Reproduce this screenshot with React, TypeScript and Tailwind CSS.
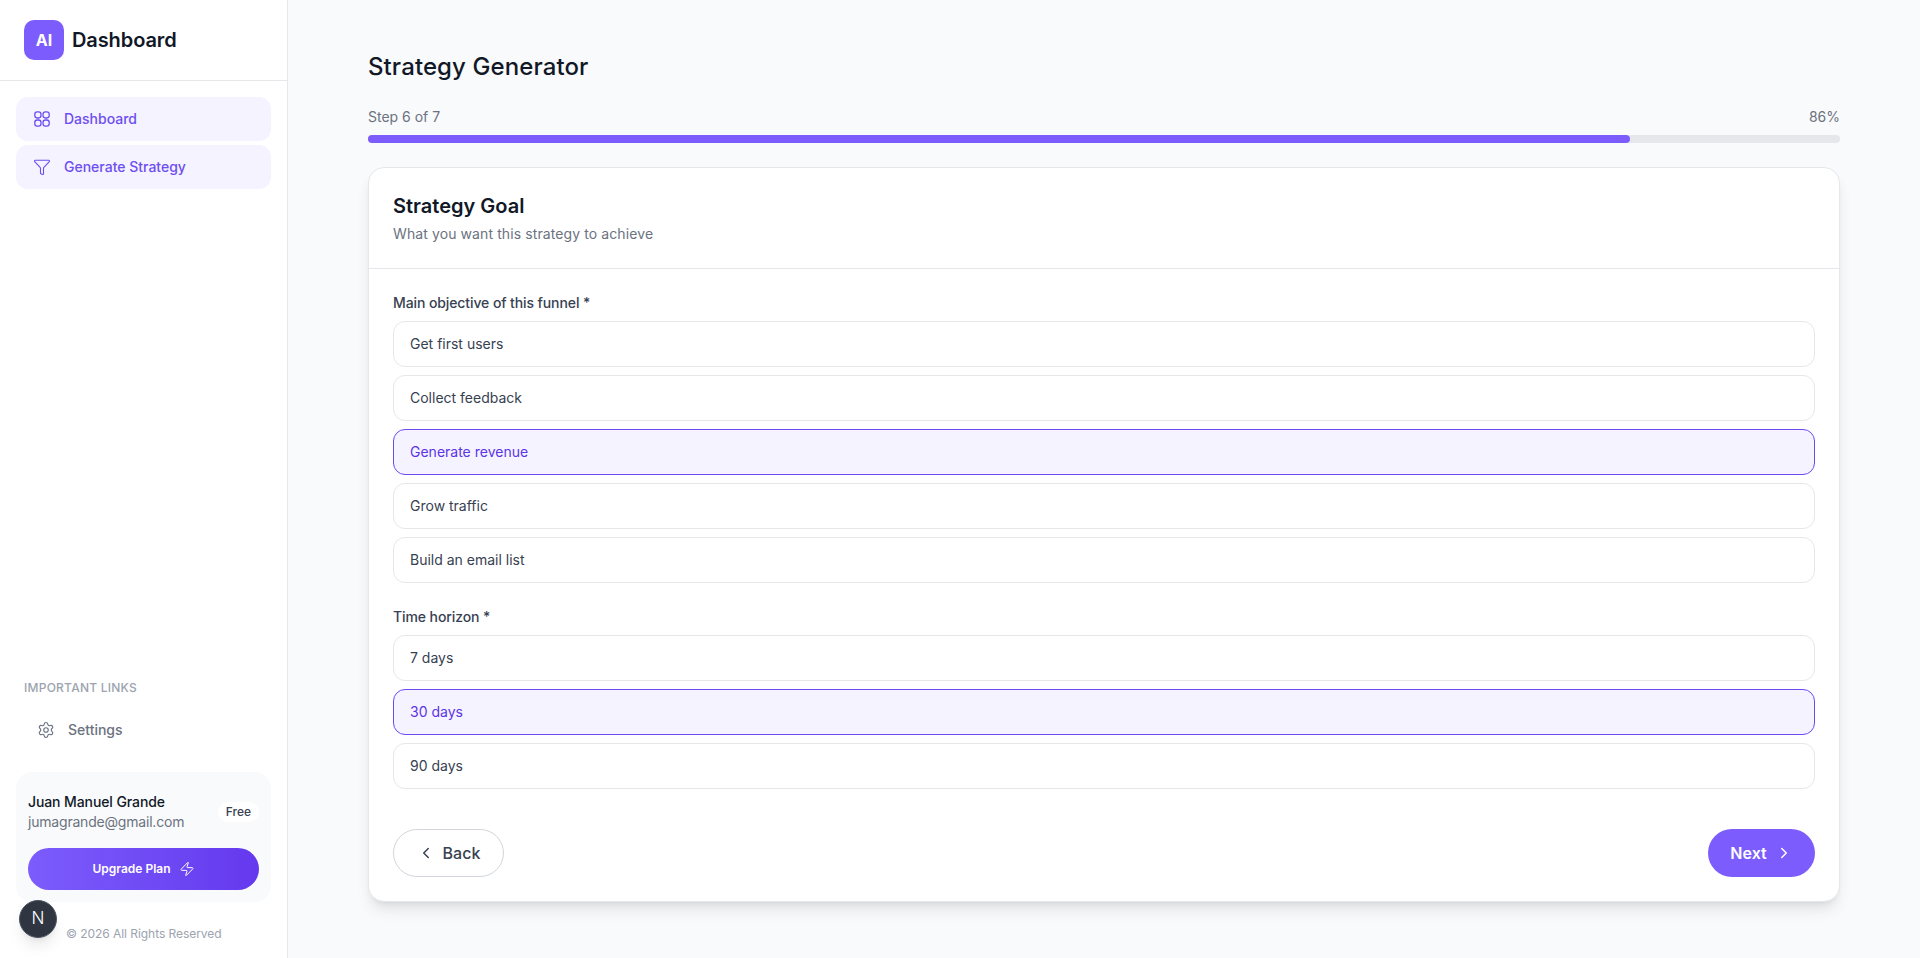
import { ChevronLeft, ChevronRight, Funnel, Settings, Zap } from "lucide-react";

const objectives = [
  { label: "Get first users" },
  { label: "Collect feedback" },
  { label: "Generate revenue", selected: true },
  { label: "Grow traffic" },
  { label: "Build an email list" },
];

const horizons = [
  { label: "7 days" },
  { label: "30 days", selected: true },
  { label: "90 days" },
];

const GridIcon = () => (
  <svg width="18" height="18" viewBox="0 0 18 18" fill="none" stroke="currentColor" strokeWidth="1.3" className="shrink-0">
    <rect x="1.8" y="1.8" width="6.2" height="6.2" rx="2.4" />
    <rect x="10" y="1.8" width="6.2" height="6.2" rx="2.4" />
    <rect x="1.8" y="10" width="6.2" height="6.2" rx="2.4" />
    <rect x="10" y="10" width="6.2" height="6.2" rx="2.4" />
  </svg>
);

const Option = ({ label, selected }: { label: string; selected?: boolean }) => (
  <button
    type="button"
    className={`h-[46px] w-full rounded-xl border px-4 text-left text-sm ${
      selected
        ? "border-[#6d4aef] bg-[#f5f3ff] text-[#5b34e6]"
        : "border-[#e5e7eb] bg-white text-[#374151]"
    }`}
  >
    {label}
  </button>
);

export default function App() {
  return (
    <div className="flex h-screen bg-[#f9fafb] font-['Inter',sans-serif] text-[#111827]">
      <aside className="relative flex w-[288px] shrink-0 flex-col border-r border-[#e5e7eb] bg-white">
        <div className="flex h-[81px] items-center gap-2 border-b border-[#e5e7eb] px-6">
          <div className="flex size-10 items-center justify-center rounded-[10px] bg-[#7c5cfc] text-base font-bold text-white">
            AI
          </div>
          <span className="text-xl font-semibold tracking-[-0.1px]">Dashboard</span>
        </div>

        <nav className="flex flex-col gap-1 px-4 pt-4">
          <a className="flex h-11 items-center gap-[13px] rounded-xl bg-[#f5f3ff] px-[17px] text-sm font-medium text-[#6d4ef0]">
            <GridIcon />
            Dashboard
          </a>
          <a className="flex h-11 items-center gap-[13px] rounded-xl bg-[#f5f3ff] px-[17px] text-sm font-medium text-[#6d4ef0]">
            <Funnel size={18} strokeWidth={1.5} className="shrink-0" />
            Generate Strategy
          </a>
        </nav>

        <div className="mt-auto">
          <p className="px-6 text-xs font-medium uppercase tracking-[0.02em] text-[#9ca3af]">Important Links</p>
          <a className="mt-6 flex items-center gap-[13px] px-[37px] text-sm font-medium text-[#6b7280]">
            <Settings size={18} strokeWidth={1.5} className="shrink-0" />
            Settings
          </a>

          <div className="mx-4 mt-8 rounded-2xl bg-[#f9fafb] px-3 pt-5 pb-3">
            <div className="flex items-center justify-between">
              <div>
                <p className="text-sm font-medium tracking-[-0.1px] text-[#111827]">Juan Manuel Grande</p>
                <p className="text-sm tracking-[-0.2px] text-[#6b7280]">jumagrande@gmail.com</p>
              </div>
              <span className="rounded-full bg-white px-2 py-0.5 text-xs font-medium text-[#374151]">Free</span>
            </div>
            <button
              type="button"
              className="mt-4 flex h-[42px] w-full items-center justify-center gap-2 rounded-full bg-gradient-to-r from-[#7c5cfc] to-[#6538ee] text-xs font-semibold text-white"
            >
              Upgrade Plan
              <Zap size={16} strokeWidth={1.5} />
            </button>
          </div>

          <p className="mt-6 mb-4 pl-[66px] text-xs tracking-[-0.05px] text-[#9ca3af]">© 2026 All Rights Reserved</p>
        </div>

        <div className="absolute bottom-[20px] left-[19px] flex size-[38px] items-center justify-center rounded-full border border-[#4b5563] bg-[#2f3641] text-[17px] font-light text-white shadow-lg">
          N
        </div>
      </aside>

      <main className="flex-1 px-20 pt-[51px]">
        <h1 className="text-2xl font-medium tracking-[0.1px]">Strategy Generator</h1>

        <div className="mt-6 flex justify-between text-sm text-[#6b7280]">
          <span>Step 6 of 7</span>
          <span>86%</span>
        </div>
        <div className="mt-2 h-2 rounded-full bg-[#e5e7eb]">
          <div className="h-2 w-[85.7%] rounded-full bg-[#7c5cfc]" />
        </div>

        <section className="mt-6 rounded-2xl border border-[#e5e7eb] bg-white shadow-lg">
          <header className="border-b border-[#e5e7eb] p-6">
            <h2 className="text-xl font-semibold">Strategy Goal</h2>
            <p className="mt-1 text-sm tracking-[0.1px] text-[#6b7280]">What you want this strategy to achieve</p>
          </header>

          <div className="p-6">
            <p className="mb-2 text-sm font-medium tracking-[-0.1px] text-[#374151]">Main objective of this funnel *</p>
            <div className="flex flex-col gap-2">
              {objectives.map((o) => (
                <Option key={o.label} {...o} />
              ))}
            </div>

            <p className="mt-6 mb-2 text-sm font-medium tracking-[-0.1px] text-[#374151]">Time horizon *</p>
            <div className="flex flex-col gap-2">
              {horizons.map((o) => (
                <Option key={o.label} {...o} />
              ))}
            </div>

            <div className="mt-10 flex items-center justify-between">
              <button
                type="button"
                className="flex h-12 w-[111px] items-center justify-center gap-2 rounded-full border border-[#d1d5db] bg-white text-base font-medium text-[#374151]"
              >
                <ChevronLeft size={18} />
                Back
              </button>
              <button
                type="button"
                className="flex h-12 w-[107px] items-center justify-center gap-2 rounded-full bg-[#7c5cfc] text-base font-semibold text-white"
              >
                Next
                <ChevronRight size={18} />
              </button>
            </div>
          </div>
        </section>
      </main>
    </div>
  );
}
